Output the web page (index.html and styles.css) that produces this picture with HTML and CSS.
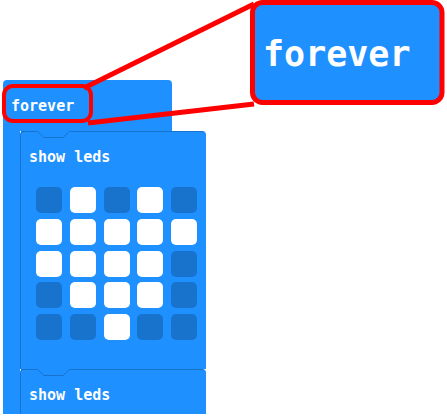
FILE: index.html
```html
<!DOCTYPE html>
<html>
<head>
<meta charset="utf-8">
<link rel="stylesheet" href="styles.css">
</head>
<body>
<div class="workspace">
  <div class="forever">
    <div class="forever-head"><span class="label">forever</span></div>
    <div class="forever-body">
      <div class="arm"></div>
      <div class="stack">
        <div class="block">
          <svg class="notch" width="60" height="10" viewBox="0 0 60 10"><rect x="16" y="0" width="34" height="2" fill="#1e90ff"/><polyline points="0,0.5 16.5,0.5 23,6.5 42,6.5 48.5,0.5 60,0.5" fill="#1e90ff" stroke="#1873cc" stroke-width="1"/></svg>
          <div class="label">show leds</div>
          <div class="leds">
            <span class="led"></span><span class="led on"></span><span class="led"></span><span class="led on"></span><span class="led"></span>
            <span class="led on"></span><span class="led on"></span><span class="led on"></span><span class="led on"></span><span class="led on"></span>
            <span class="led on"></span><span class="led on"></span><span class="led on"></span><span class="led on"></span><span class="led"></span>
            <span class="led"></span><span class="led on"></span><span class="led on"></span><span class="led on"></span><span class="led"></span>
            <span class="led"></span><span class="led"></span><span class="led on"></span><span class="led"></span><span class="led"></span>
          </div>
        </div>
        <div class="block">
          <svg class="notch" width="60" height="10" viewBox="0 0 60 10"><rect x="16" y="0" width="34" height="2" fill="#1e90ff"/><polyline points="0,0.5 16.5,0.5 23,6.5 42,6.5 48.5,0.5 60,0.5" fill="#1e90ff" stroke="#1873cc" stroke-width="1"/></svg>
          <div class="label">show leds</div>
          <div class="leds">
            <span class="led"></span><span class="led"></span><span class="led"></span><span class="led"></span><span class="led"></span>
          </div>
        </div>
      </div>
    </div>
  </div>
  <svg class="callout" width="447" height="416" viewBox="0 0 447 416">
    <line x1="84" y1="88" x2="254" y2="4" stroke="#ff0000" stroke-width="5"/>
    <line x1="88" y1="123" x2="254" y2="104" stroke="#ff0000" stroke-width="5"/>
    <rect x="4" y="86" width="87" height="35" rx="9" fill="none" stroke="#ff0000" stroke-width="4"/>
    <rect x="252.5" y="2.5" width="189.5" height="100" rx="10" fill="#1e90ff" stroke="#ff0000" stroke-width="5"/>
  </svg>
  <div class="zoom-label">forever</div>
</div>
</body>
</html>
```

FILE: styles.css
```css
html, body {
  margin: 0;
  padding: 0;
  background: #ffffff;
}

.workspace {
  position: relative;
  width: 447px;
  height: 414px;
  overflow: hidden;
  box-sizing: border-box;
  padding: 80px 0 0 3px;
  font-family: "DejaVu Sans Mono", monospace;
  font-weight: bold;
  color: #ffffff;
}

.forever {
  display: flex;
  flex-direction: column;
}

.forever-head {
  width: 169px;
  height: 51px;
  box-sizing: border-box;
  background: #1e90ff;
  border-radius: 4px 4px 0 0;
  padding: 16px 0 0 8px;
}

.label {
  display: block;
  font-size: 15px;
  line-height: 20px;
  white-space: nowrap;
}

.forever-body {
  display: flex;
  align-items: stretch;
}

.arm {
  width: 17px;
  background: #1e90ff;
}

.stack {
  display: flex;
  flex-direction: column;
}

.block {
  position: relative;
  width: 186px;
  box-sizing: border-box;
  background: #1e90ff;
  border: 1px solid #1873cc;
  border-right-color: #1e90ff;
  border-bottom: none;
  border-radius: 4px 4px 0 0;
  padding: 15px 0 29px 15px;
}

.block .label {
  margin-left: -7px;
}

.notch {
  position: absolute;
  top: -1px;
  left: 0;
  overflow: visible;
}

.leds {
  display: grid;
  grid-template-columns: repeat(5, 26px);
  grid-auto-rows: 26px;
  column-gap: 7.75px;
  row-gap: 5.75px;
  margin-top: 20px;
}

.led {
  border-radius: 5px;
  background: #1873cc;
}

.led.on {
  background: #ffffff;
}

.callout {
  position: absolute;
  left: 0;
  top: 0;
  pointer-events: none;
}

.zoom-label {
  position: absolute;
  left: 255px;
  top: 34px;
  padding-left: 8px;
  font-size: 35px;
  line-height: 40px;
  white-space: nowrap;
}
```
